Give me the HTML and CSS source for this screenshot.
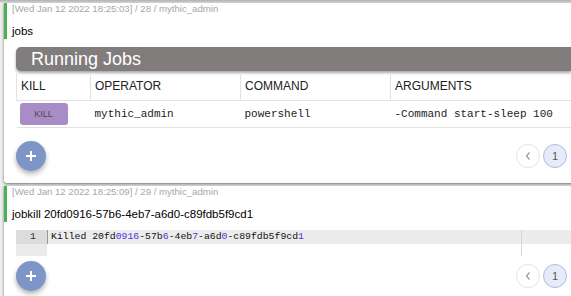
FILE: index.html
```html
<!DOCTYPE html>
<html lang="en">
<head>
    <meta charset="UTF-8">
    <title>Tasks</title>
    <link rel="stylesheet" href="styles.css">
</head>
<body>
    <div class="card">
        <div class="task-head">
            <div class="meta">[Wed Jan 12 2022 18:25:03] / 28 / mythic_admin</div>
            <div class="command">jobs</div>
        </div>
        <div class="task-body">
            <div class="table-title">Running Jobs</div>
            <table class="jobs">
                <thead>
                    <tr>
                        <th class="col-kill">KILL</th>
                        <th class="col-op">OPERATOR</th>
                        <th class="col-cmd">COMMAND</th>
                        <th>ARGUMENTS</th>
                    </tr>
                </thead>
                <tbody>
                    <tr>
                        <td><button class="kill-btn">KILL</button></td>
                        <td class="mono">mythic_admin</td>
                        <td class="mono">powershell</td>
                        <td class="mono">-Command start-sleep 100</td>
                    </tr>
                </tbody>
            </table>
            <div class="footer-row first">
                <button class="fab">
                    <svg width="12" height="12" viewBox="0 0 12 12"><path d="M6 1v10M1 6h10" stroke="#fff" stroke-width="2"/></svg>
                </button>
                <div class="pager">
                    <span class="page prev">
                        <svg width="8" height="10" viewBox="0 0 8 10"><path d="M5.5 1.5 2.5 5l3 3.5" fill="none" stroke="#999" stroke-width="1.2"/></svg>
                    </span>
                    <span class="page current">1</span>
                </div>
            </div>
        </div>
    </div>

    <div class="card">
        <div class="task-head">
            <div class="meta">[Wed Jan 12 2022 18:25:09] / 29 / mythic_admin</div>
            <div class="command">jobkill 20fd0916-57b6-4eb7-a6d0-c89fdb5f9cd1</div>
        </div>
        <div class="task-body">
            <div class="editor">
                <div class="gutter">
                    <div class="gutter-cell active">1</div>
                    <div class="gutter-cell"></div>
                </div>
                <div class="lines">
                    <div class="line active">Killed 20fd<span class="num">0916</span>-57b<span class="num">6</span>-4eb<span class="num">7</span>-a6d<span class="num">0</span>-c89fdb5f9cd<span class="num">1</span></div>
                    <div class="print-margin"></div>
                </div>
            </div>
            <div class="footer-row second">
                <button class="fab">
                    <svg width="12" height="12" viewBox="0 0 12 12"><path d="M6 1v10M1 6h10" stroke="#fff" stroke-width="2"/></svg>
                </button>
                <div class="pager">
                    <span class="page prev">
                        <svg width="8" height="10" viewBox="0 0 8 10"><path d="M5.5 1.5 2.5 5l3 3.5" fill="none" stroke="#999" stroke-width="1.2"/></svg>
                    </span>
                    <span class="page current">1</span>
                </div>
            </div>
        </div>
    </div>
</body>
</html>
```

FILE: styles.css
```css
* {
    box-sizing: border-box;
}

body {
    margin: 0;
    padding-top: 3px;
    overflow: hidden;
    font-family: "Liberation Sans", Arial, sans-serif;
    color: #111;
    background: linear-gradient(#b0b0b0, #cfcfcf 2px, #eeeeee 3px) no-repeat top / 100% 3px;
    background-color: #eeeeee;
}

.card {
    width: 579px;
    margin-left: 4px;
    margin-bottom: 3px;
    background-color: #fff;
    border-radius: 0 0 3px 3px;
    box-shadow: 0 1px 3px rgba(0, 0, 0, 0.55);
}

.task-head {
    border-left: 3px solid #4caf50;
    padding: 0 0 1px 5px;
}

.meta {
    font-size: 9.6px;
    line-height: 12px;
    color: #a6a6a6;
}

.command {
    margin-top: 9px;
    font-size: 11.5px;
    line-height: 14px;
    color: #000;
}

.task-body {
    padding: 8px 12px 12px 12px;
}

.table-title {
    height: 24px;
    line-height: 24px;
    padding-left: 15px;
    background-color: #827d7d;
    color: #fff;
    font-size: 18px;
    border-radius: 5px 0 0 5px;
    box-shadow: 0 2px 3px rgba(0, 0, 0, 0.35);
}

.jobs {
    width: 100%;
    margin-top: 2px;
    border-collapse: collapse;
    table-layout: fixed;
}

.jobs th {
    height: 27px;
    padding: 0 4px;
    text-align: left;
    font-weight: normal;
    font-size: 12px;
    color: #222;
    border: 1px solid #e2e2e2;
    border-top: none;
}

.jobs th:last-child {
    border-right: none;
}

.col-kill { width: 74px; }
.col-op { width: 150px; }
.col-cmd { width: 150px; }

.jobs td {
    height: 27px;
    padding: 0 4px;
    border-bottom: 1px solid #e2e2e2;
}

.jobs td:first-child {
    padding: 0 3px;
}

.mono {
    font-family: "Liberation Mono", "DejaVu Sans Mono", monospace;
    font-size: 11px;
    color: #222;
}

.kill-btn {
    width: 48px;
    height: 22px;
    border: none;
    border-radius: 3px;
    background-color: #a98cc5;
    color: #4a4a4a;
    font-family: "Liberation Sans", Arial, sans-serif;
    font-size: 9px;
    padding: 0;
}

.footer-row {
    display: flex;
    justify-content: space-between;
    align-items: center;
}

.footer-row.first {
    margin-top: 13px;
}

.footer-row.second {
    margin-top: 5px;
}

.fab {
    width: 30px;
    height: 30px;
    border: none;
    border-radius: 50%;
    padding: 0;
    background-color: #7e95c8;
    box-shadow: 0 3px 5px rgba(0, 0, 0, 0.3);
    display: flex;
    align-items: center;
    justify-content: center;
}

.pager {
    display: flex;
    gap: 3px;
    margin-right: 4px;
}

.page {
    width: 24px;
    height: 24px;
    border-radius: 50%;
    display: flex;
    align-items: center;
    justify-content: center;
    font-size: 11px;
    color: #555;
}

.page.prev {
    border: 1px solid #e4e4e4;
}

.page.current {
    background-color: #e6ecf7;
    border: 1px solid #a9bbe0;
}

.editor {
    display: flex;
    height: 26px;
    font-family: "Liberation Mono", "DejaVu Sans Mono", monospace;
    font-size: 9.8px;
}

.gutter {
    width: 31px;
    background-color: #ebebeb;
}

.gutter-cell {
    height: 14px;
    line-height: 14px;
    padding-right: 11px;
    text-align: right;
    color: #333;
}

.gutter-cell.active {
    background-color: #dcdcdc;
}

.lines {
    flex: 1;
    position: relative;
}

.line {
    height: 14px;
    line-height: 14px;
    padding-left: 3px;
    color: #111;
}

.line.active {
    background-color: #ececec;
    border-left: 1px solid #999;
}

.num {
    color: #5a2ee0;
}

.print-margin {
    position: absolute;
    left: 474px;
    top: 0;
    bottom: 0;
    width: 1px;
    background-color: #d4d4d4;
}
```
